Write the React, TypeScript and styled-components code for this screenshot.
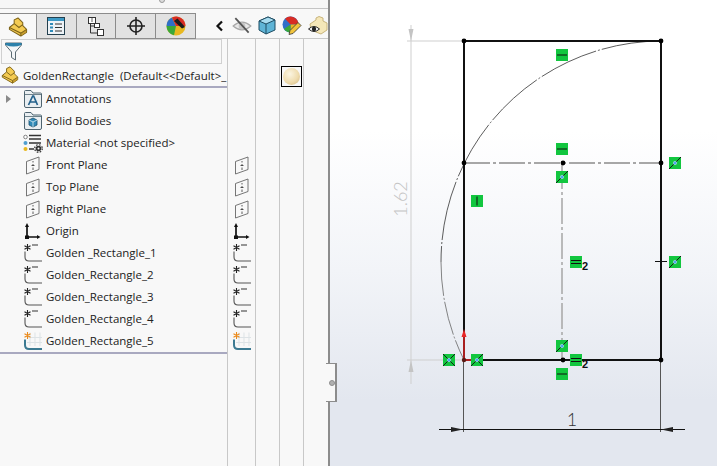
import styled, { createGlobalStyle } from "styled-components";

const GlobalStyle = createGlobalStyle`
  html, body {
    margin: 0;
    padding: 0;
    width: 717px;
    height: 466px;
    overflow: hidden;
    background: #f8f8f8;
  }
`;

const Window = styled.div`
  display: flex;
  width: 717px;
  height: 466px;
  font-family: "Open Sans", "Noto Sans", sans-serif;
  font-size: 11.5px;
  color: #222;
`;

const Sidebar = styled.aside`
  position: relative;
  z-index: 1;
  display: flex;
  flex-direction: column;
  box-sizing: border-box;
  width: 330px;
  height: 466px;
  background: #f8f8f8;
  border-right: 2px solid #8c8c8c;
`;

const Notch = styled.div`
  position: absolute;
  top: 363px;
  left: 326px;
  display: flex;
  align-items: center;
  justify-content: center;
  box-sizing: border-box;
  width: 11px;
  height: 39px;
  padding-left: 3px;
  background: #f8f8f8;
  border: 1px solid #8c8c8c;
  border-right-width: 2px;
  border-left: none;
`;

const NotchDot = styled.span`
  width: 6px;
  height: 6px;
  border-radius: 50%;
  background: #b0b0b0;
  border: 1px solid #8f8f8f;
  box-sizing: border-box;
`;

const TopStrip = styled.div`
  position: relative;
  flex: none;
  height: 8px;
  border-bottom: 1px solid #c4c4c4;
  background: #f6f6f6;
`;

const Grip = styled.span`
  position: absolute;
  top: -3px;
  left: 159px;
  width: 6px;
  height: 6px;
  border-radius: 50%;
  background: #ddd;
  border: 1px solid #999;
  box-sizing: border-box;
`;

const TabBar = styled.div`
  display: flex;
  flex: none;
  align-items: stretch;
  height: 26px;
  margin-top: 4px;
`;

const Tab = styled.div<{ $active?: boolean }>`
  display: flex;
  align-items: center;
  justify-content: center;
  box-sizing: border-box;
  width: ${({ $active }) => ($active ? "37px" : "40px")};
  background: ${({ $active }) => ($active ? "#f8f8f8" : "#e2e2e2")};
  border-top: 1px solid #8c8c8c;
  border-right: 1px solid #8c8c8c;
  border-bottom: ${({ $active }) => ($active ? "none" : "1px solid #8c8c8c")};
`;

const DisplayTools = styled.div`
  display: flex;
  flex: 1;
  align-items: center;
  box-sizing: border-box;
  padding-left: 19px;
  gap: 6px;
  border-bottom: 1px solid #c8c8c8;
`;

const Chevron = styled.span`
  display: flex;
  width: 12px;
  margin-right: -1px;
`;

const Body = styled.div`
  display: flex;
  flex: 1;
  min-height: 0;
`;

const TreeColumn = styled.div`
  display: flex;
  flex-direction: column;
  flex: none;
  width: 227px;
`;

const FilterBox = styled.div`
  display: flex;
  flex: none;
  align-items: center;
  box-sizing: border-box;
  height: 25px;
  margin: 0 5px 0 1px;
  padding-left: 3px;
  border: 1px solid #d0d0d0;
`;

const RootRow = styled.div`
  display: flex;
  align-items: center;
  box-sizing: border-box;
  flex: none;
  height: 24px;
  gap: 4px;
  padding-left: 1px;
  white-space: pre;
  overflow: hidden;
  border-bottom: 2px solid #a9a9c0;
`;

const TreeList = styled.div`
  display: flex;
  flex-direction: column;
  border-bottom: 2px solid #a9a9c0;
`;

const TreeRow = styled.div`
  position: relative;
  display: flex;
  align-items: center;
  height: 22px;
  padding-left: 20px;
  white-space: pre;
`;

const RowLabel = styled.span`
  margin-top: -2px;
`;

const Expander = styled.span`
  position: absolute;
  left: 6px;
  top: 7px;
  width: 0;
  height: 0;
  border-left: 5px solid #8a8a8a;
  border-top: 4px solid transparent;
  border-bottom: 4px solid transparent;
`;

const IconSlot = styled.span`
  display: flex;
  flex: none;
  align-items: center;
  justify-content: center;
  width: 26px;
`;

const DisplayColumn = styled.div<{ $width: number; $top?: number }>`
  display: flex;
  flex-direction: column;
  flex: none;
  box-sizing: border-box;
  width: ${({ $width }) => $width}px;
  padding-top: ${({ $top }) => $top ?? 0}px;
  border-left: 1px solid #c8c8c8;
`;

const DisplayCell = styled.div`
  display: flex;
  align-items: center;
  justify-content: center;
  height: 22px;
`;

const Swatch = styled.div`
  display: flex;
  align-items: center;
  justify-content: center;
  box-sizing: border-box;
  width: 21px;
  height: 21px;
  margin-left: 1px;
  border: 1px solid #000;
  background: #f8f8f8;
`;

const Ball = styled.span`
  width: 17px;
  height: 17px;
  border-radius: 50%;
  background: radial-gradient(circle at 40% 35%, #fbf5e2 0%, #efdcae 55%, #cdb27c 100%);
`;

const Canvas = styled.main`
  flex: 1;
  height: 466px;
  background: linear-gradient(180deg, #ffffff 0%, #ffffff 28%, #f2f4f8 58%, #e3e7ef 86%, #e3e7ef 100%);
`;

const SketchSvg = styled.svg`
  display: block;
`;

const PartIcon = ({ size = 20 }: { size?: number }) => (
  <svg width={size} height={size} viewBox="0 0 20 21" style={{ flex: "none" }}>
    <path d="M1 11 L6 7 L6 3 L10 1 L15 6 L15 9 L19 13 L19 16 L13 20 L1 13 Z" fill="#f4cb52" stroke="#7d6318" strokeWidth="1.1" strokeLinejoin="round" />
    <path d="M13.5 17.5 L18.5 13.5 L18.5 16 L13.5 19.5 Z" fill="#c99d2c" />
    <path d="M1 11 L13 17 L13 20 M13 17 L19 13 M6 7 L11 11 L15 8" fill="none" stroke="#7d6318" strokeWidth="1.1" />
  </svg>
);

const PropertyIcon = () => (
  <svg width="18" height="18" viewBox="0 0 18 18">
    <rect x="0.5" y="0.5" width="17" height="17" fill="#eef3f7" stroke="#23404f" />
    <rect x="1" y="1" width="16" height="3" fill="#3d9ac6" />
    <path d="M3 7 H6 M3 10.5 H6 M3 14 H6" stroke="#2f8ab8" strokeWidth="2" />
    <path d="M8 7 H15 M8 10.5 H15 M8 14 H15" stroke="#333" strokeWidth="1.2" />
  </svg>
);

const ConfigIcon = () => (
  <svg width="16" height="19" viewBox="0 0 16 19">
    <rect x="0.5" y="0.5" width="7" height="6" fill="#fff" stroke="#333" />
    <rect x="6.5" y="6.5" width="5" height="4" fill="#fff" stroke="#333" />
    <rect x="9.5" y="12.5" width="6" height="6" fill="#fff" stroke="#333" />
    <path d="M2.5 7 V16 H9.5 M2.5 9 H6.5" fill="none" stroke="#333" />
    <path d="M3 2 H5 M3 4 H5" stroke="#333" strokeWidth="0.8" />
  </svg>
);

const CrosshairIcon = () => (
  <svg width="20" height="20" viewBox="0 0 20 20">
    <circle cx="10" cy="10" r="6" fill="none" stroke="#222" strokeWidth="1.6" />
    <path d="M10 1 V19 M1 10 H19" stroke="#222" strokeWidth="1.6" />
  </svg>
);

const AppearanceIcon = () => (
  <svg width="20" height="20" viewBox="0 0 20 20">
    <circle cx="10" cy="10" r="9.5" fill="#e8b820" />
    <path d="M10 10 L0.5 10 A9.5 9.5 0 0 1 6 1.4 Z" fill="#2f6fc8" />
    <path d="M10 10 L6 1.4 A9.5 9.5 0 0 1 19.5 10 Z" fill="#d82c24" />
    <path d="M10 10 L0.5 10 A9.5 9.5 0 0 0 8 19.3 Z" fill="#3aa83a" />
    <path d="M8 5 L11.5 2.5 L19 11 L16 12.5 Z" fill="#1b1b1b" />
  </svg>
);

const ChevronIcon = () => (
  <svg width="9" height="12" viewBox="0 0 9 12">
    <path d="M7 1.5 L2.5 6 L7 10.5" fill="none" stroke="#111" strokeWidth="2.2" />
  </svg>
);

const HideIcon = () => (
  <svg width="20" height="18" viewBox="0 0 18 16">
    <path d="M1 8 Q9 1 17 8 Q9 15 1 8 Z" fill="#e8e8e8" stroke="#a8a8a8" />
    <circle cx="9" cy="8" r="3" fill="#c4c4c4" />
    <path d="M3 1 L15 14" stroke="#555" strokeWidth="1.6" />
  </svg>
);

const CubeIcon = () => (
  <svg width="18" height="19" viewBox="0 0 18 19">
    <path d="M1 5 L10 1 L17 4 L17 14 L8 18 L1 14 Z" fill="#5fb4d6" stroke="#1f4d63" strokeLinejoin="round" />
    <path d="M1 5 L8 8 L17 4 L10 1 Z" fill="#a8dcf0" stroke="#1f4d63" strokeLinejoin="round" />
    <path d="M8 8 V18" stroke="#1f4d63" />
  </svg>
);

const ColorPencilIcon = () => (
  <svg width="20" height="20" viewBox="0 0 20 20">
    <circle cx="8.5" cy="8.5" r="8" fill="#2f6fc8" />
    <path d="M8.5 8.5 L3 2.7 A8 8 0 0 1 16.5 8.5 Z" fill="#d82c24" />
    <path d="M8.5 8.5 L16.5 8.5 A8 8 0 0 1 8.5 16.5 Z" fill="#e8b820" />
    <path d="M8.5 8.5 L8.5 16.5 A8 8 0 0 1 2 13 Z" fill="#3aa83a" />
    <path d="M7 18.5 L8 14.5 L16 6.5 L19 9.5 L11 17.5 Z" fill="#f2c43c" stroke="#333" strokeWidth="0.8" />
  </svg>
);

const PartEyeIcon = () => (
  <svg width="20" height="19" viewBox="0 0 20 19">
    <path d="M2 8 L8 4 L8 2 L11 0.5 L15 2 L15 5 L19 7 L19 14 L13 18 L3 14 Z" fill="#f5e7b8" stroke="#c8b47c" />
    <path d="M0.5 13 Q6 8 11.5 13 Q6 18 0.5 13 Z" fill="#fff" stroke="#222" />
    <circle cx="6" cy="13" r="2.2" fill="#222" />
  </svg>
);

const FunnelIcon = () => (
  <svg width="17" height="19" viewBox="0 0 17 19">
    <path d="M0.5 1 H16.5 V3 L10.5 10 V18 L6.5 15.5 V10 L0.5 3 Z" fill="#f2f5f7" stroke="#5a6a72" strokeLinejoin="round" />
    <path d="M0.5 1 H16.5 V3 Q8.5 6 0.5 3 Z" fill="#2b80aa" />
  </svg>
);

const Folder = ({ children }: { children: React.ReactNode }) => (
  <svg width="18" height="18" viewBox="0 0 18 18">
    <path d="M0.5 4 V1.5 Q0.5 0.5 1.5 0.5 H7 L9 3 H16.5 Q17.5 3 17.5 4 V16 Q17.5 17.5 16 17.5 H2 Q0.5 17.5 0.5 16 Z" fill="#e9eef1" stroke="#4e6470" />
    <path d="M1 4.5 H17" stroke="#4e6470" strokeWidth="0.8" />
    {children}
  </svg>
);

const AnnotationIcon = () => (
  <Folder>
    <path d="M4.5 15 L8.7 6 H9.6 L13.5 15 M6 12 H12" fill="none" stroke="#24628c" strokeWidth="1.7" />
  </Folder>
);

const BodiesIcon = () => (
  <Folder>
    <path d="M5 8 L9 6 L13 8 V13 L9 15 L5 13 Z" fill="#2f8ab8" stroke="#1c4f6c" strokeWidth="0.8" />
    <path d="M5 8 L9 10 L13 8 M9 10 V15" fill="none" stroke="#dcecf4" strokeWidth="0.8" />
  </Folder>
);

const MaterialIcon = () => (
  <svg width="20" height="19" viewBox="0 0 20 19">
    <circle cx="2.5" cy="3" r="1.8" fill="#fff" stroke="#666" strokeWidth="0.8" />
    <circle cx="2.5" cy="9" r="2" fill="#4f9ed0" />
    <circle cx="2.5" cy="15" r="2" fill="#e8b820" />
    <path d="M6 1.5 H18 M6 5 H18 M6 9 H18 M6 15 H11" stroke="#333" strokeWidth="1.3" />
    <circle cx="15.5" cy="14.5" r="2.8" fill="#333" />
    <circle cx="15.5" cy="14.5" r="3.8" fill="none" stroke="#333" strokeWidth="1.2" strokeDasharray="1.6 1.4" />
    <circle cx="15.5" cy="14.5" r="1" fill="#f8f8f8" />
  </svg>
);

const PlaneIcon = () => (
  <svg width="14" height="19" viewBox="0 0 14 19">
    <path d="M0.5 5.5 L13 1 V13.5 L0.5 18 Z" fill="none" stroke="#666" strokeWidth="0.9" />
    <path d="M7 5 V6.5 M7 8 V10 M7 11.5 V14 M5.5 9.5 H8.5" stroke="#333" strokeWidth="0.8" />
  </svg>
);

const OriginIcon = () => (
  <svg width="18" height="18" viewBox="0 0 18 18">
    <path d="M3 1 L5 5 H1 Z M16.5 15 L13 17 V13 Z" fill="#111" />
    <path d="M3 4 V15 H14" fill="none" stroke="#111" strokeWidth="1.7" />
    <rect x="1" y="13.5" width="4" height="3.5" fill="#111" />
  </svg>
);

const SketchIcon = ({ active }: { active?: boolean }) => (
  <svg width="18" height="18" viewBox="0 0 18 18">
    {active && (
      <path d="M6 0.5 V14 M11 0.5 V14 M16 0.5 V14 M3 5.5 H18 M3 10.5 H18" stroke="#dde3e6" strokeWidth="1" />
    )}
    {!active && <path d="M8 1 H14" stroke="#333" strokeWidth="1" />}
    <path d="M3.5 0 V7 M0.5 1.7 L6.5 5.3 M6.5 1.7 L0.5 5.3" stroke={active ? "#ea8a1c" : "#222"} strokeWidth="1.1" />
    <path d="M1 7.5 V13 Q1 17 5 17 H18" fill="none" stroke={active ? "#3c7a92" : "#555"} strokeWidth={active ? 2 : 1.1} />
  </svg>
);

type Feature = { name: string; icon: React.ReactNode; flag?: React.ReactNode; expandable?: boolean };

const sketches = ["Golden _Rectangle_1", "Golden_Rectangle_2", "Golden_Rectangle_3", "Golden_Rectangle_4"];

const features: Feature[] = [
  { name: "Annotations", icon: <AnnotationIcon />, expandable: true },
  { name: "Solid Bodies", icon: <BodiesIcon /> },
  { name: "Material <not specified>", icon: <MaterialIcon /> },
  { name: "Front Plane", icon: <PlaneIcon />, flag: <PlaneIcon /> },
  { name: "Top Plane", icon: <PlaneIcon />, flag: <PlaneIcon /> },
  { name: "Right Plane", icon: <PlaneIcon />, flag: <PlaneIcon /> },
  { name: "Origin", icon: <OriginIcon />, flag: <OriginIcon /> },
  ...sketches.map((name) => ({ name, icon: <SketchIcon />, flag: <SketchIcon /> })),
  { name: "Golden_Rectangle_5", icon: <SketchIcon active />, flag: <SketchIcon active /> },
];

type RelationKind = "horizontal" | "vertical" | "concentric" | "crossed" | "tangent" | "equal";

const Relation = ({ x, y, kind, index }: { x: number; y: number; kind: RelationKind; index?: boolean }) => (
  <g transform={`translate(${x} ${y})`} fill="none">
    <rect width="12" height="12" fill="#12c63f" />
    {kind === "horizontal" && <path d="M1 6 H11" stroke="#111" strokeWidth="1" />}
    {kind === "vertical" && <path d="M6 1.5 V10.5" stroke="#111" strokeWidth="1" />}
    {kind === "equal" && <path d="M1 4.5 H11 M1 7.5 H11" stroke="#111" strokeWidth="1" />}
    {kind === "concentric" && <path d="M0 12 L12 0" stroke="#111" strokeWidth="0.9" />}
    {kind === "crossed" && <path d="M0 12 L12 0 M0 0 L12 12" stroke="#111" strokeWidth="0.9" />}
    {kind === "tangent" && <path d="M0 12 L6 6 L12 12 M6 6 L12 0" stroke="#111" strokeWidth="0.9" />}
    {(kind === "concentric" || kind === "crossed" || kind === "tangent") && (
      <circle cx="6" cy="6" r="1.7" fill="#4aa8f0" stroke="#cfe8fa" strokeWidth="0.5" />
    )}
    {index && (
      <text x="12" y="14" fontFamily="Liberation Sans, sans-serif" fontSize="11" fontWeight="bold" fill="#111">
        2
      </text>
    )}
  </g>
);

const sketchPoints = [
  [464, 41], [661, 41], [464, 163], [563, 163], [661, 163], [563, 360], [661, 360],
];

const relations: { x: number; y: number; kind: RelationKind; index?: boolean }[] = [
  { x: 556, y: 49, kind: "horizontal" },
  { x: 556, y: 143, kind: "horizontal" },
  { x: 556, y: 171, kind: "concentric" },
  { x: 669, y: 157, kind: "concentric" },
  { x: 471, y: 195, kind: "vertical" },
  { x: 570, y: 256, kind: "equal", index: true },
  { x: 669, y: 256, kind: "concentric" },
  { x: 556, y: 340, kind: "concentric" },
  { x: 570, y: 354, kind: "equal", index: true },
  { x: 556, y: 368, kind: "horizontal" },
  { x: 443, y: 354, kind: "crossed" },
  { x: 471, y: 354, kind: "tangent" },
];

const GoldenSketch = () => (
  <SketchSvg width="387" height="466" viewBox="330 0 387 466">
    {/* vertical dimension */}
    <path d="M407 41 H464 M407 360 H464 M411 25 V384" fill="none" stroke="#cfcfcf" strokeWidth="1" />
    <path d="M411 41 L408.5 29 H413.5 Z M411 360 L408.5 372 H413.5 Z" fill="#c4c4c4" />
    <text x="407" y="199" fontFamily="Lato, sans-serif" fontWeight="300" fontSize="18" textAnchor="middle" fill="#c4c4c4" transform="rotate(-90 407 199)">
      1.62
    </text>

    {/* horizontal dimension */}
    <path d="M463.5 360 V432 M660.5 360 V432" fill="none" stroke="#555" strokeWidth="1" />
    <path d="M439 429.5 H685" stroke="#111" strokeWidth="1" />
    <path d="M463 429.5 L451 427 V432 Z M661 429.5 L673 427 V432 Z" fill="#222" />
    <text x="572" y="426" fontFamily="Lato, sans-serif" fontWeight="300" fontSize="18" textAnchor="middle" fill="#333">
      1
    </text>

    {/* centerlines */}
    <path d="M464 163 H661" stroke="#8a8a8a" strokeWidth="1.4" strokeDasharray="26 3 3 3" />
    <path d="M562 163 V360" stroke="#ababab" strokeWidth="1.6" strokeDasharray="26 3 3 3" />
    <path d="M661 41 A221 221 0 0 0 441 262" fill="none" stroke="#333" strokeWidth="0.8" strokeDasharray="60 2 2 2" />
    <path d="M441 262 A221 221 0 0 0 464 360" fill="none" stroke="#666" strokeWidth="0.8" strokeDasharray="34 2 2 2" />

    {/* rectangle */}
    <path d="M464 360 V41 H661 V360 Z" fill="none" stroke="#111" strokeWidth="2" />
    <path d="M655 261.5 H667" stroke="#111" strokeWidth="1" />

    {/* origin */}
    <path d="M464 360 V336 M464 360 H472" stroke="#e82626" strokeWidth="1.4" />
    <path d="M464 329 L466.5 337 H461.5 Z" fill="#e82626" />
    <circle cx="464" cy="360" r="2.2" fill="#5a1a14" />

    {sketchPoints.map(([cx, cy]) => (
      <circle key={`${cx}-${cy}`} cx={cx} cy={cy} r="2.4" fill="#000" />
    ))}
    {relations.map((r) => (
      <Relation key={`${r.x}-${r.y}`} {...r} />
    ))}
  </SketchSvg>
);

export default function App() {
  return (
    <Window>
      <GlobalStyle />
      <Sidebar>
        <TopStrip>
          <Grip />
        </TopStrip>
        <TabBar>
          <Tab $active><PartIcon /></Tab>
          <Tab><PropertyIcon /></Tab>
          <Tab><ConfigIcon /></Tab>
          <Tab><CrosshairIcon /></Tab>
          <Tab><AppearanceIcon /></Tab>
          <DisplayTools>
            <Chevron><ChevronIcon /></Chevron>
            <HideIcon />
            <CubeIcon />
            <ColorPencilIcon />
            <PartEyeIcon />
          </DisplayTools>
        </TabBar>
        <Body>
          <TreeColumn>
            <FilterBox><FunnelIcon /></FilterBox>
            <RootRow>
              <PartIcon size={18} />
              <span>GoldenRectangle  (Default&lt;&lt;Default&gt;_</span>
            </RootRow>
            <TreeList>
              {features.map((f) => (
                <TreeRow key={f.name}>
                  {f.expandable && <Expander />}
                  <IconSlot>{f.icon}</IconSlot>
                  <RowLabel>{f.name}</RowLabel>
                </TreeRow>
              ))}
            </TreeList>
          </TreeColumn>
          <DisplayColumn $width={28} $top={49}>
            {features.map((f) => (
              <DisplayCell key={f.name}>{f.flag}</DisplayCell>
            ))}
          </DisplayColumn>
          <DisplayColumn $width={24} />
          <DisplayColumn $width={24} $top={27}>
            <Swatch><Ball /></Swatch>
          </DisplayColumn>
          <DisplayColumn $width={25} />
        </Body>
        <Notch><NotchDot /></Notch>
      </Sidebar>
      <Canvas>
        <GoldenSketch />
      </Canvas>
    </Window>
  );
}
